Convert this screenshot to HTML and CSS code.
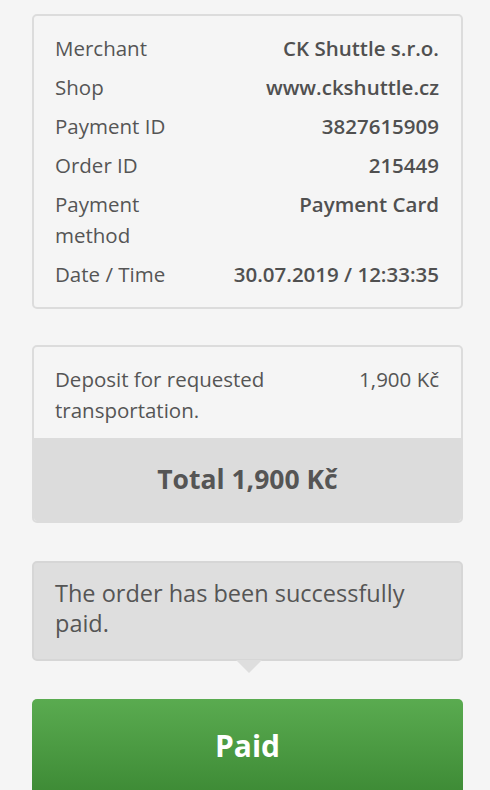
FILE: index.html
```html
<!DOCTYPE html>
<html lang="en">
<head>
    <meta charset="UTF-8">
    <meta name="viewport" content="width=device-width, initial-scale=1.0">
    <title>Payment result</title>
    <link rel="stylesheet" href="styles.css">
</head>
<body>
    <div class="page">
        <div class="box details">
            <div class="row">
                <span class="label">Merchant</span>
                <span class="value">CK Shuttle s.r.o.</span>
            </div>
            <div class="row">
                <span class="label">Shop</span>
                <span class="value">www.ckshuttle.cz</span>
            </div>
            <div class="row">
                <span class="label">Payment ID</span>
                <span class="value">3827615909</span>
            </div>
            <div class="row">
                <span class="label">Order ID</span>
                <span class="value">215449</span>
            </div>
            <div class="row">
                <span class="label narrow">Payment method</span>
                <span class="value">Payment Card</span>
            </div>
            <div class="row">
                <span class="label">Date / Time</span>
                <span class="value">30.07.2019 / 12:33:35</span>
            </div>
        </div>

        <div class="box cart">
            <div class="item">
                <span class="item-name">Deposit for requested transportation.</span>
                <span class="item-price">1,900 Kč</span>
            </div>
            <div class="total">Total 1,900 Kč</div>
        </div>

        <div class="message">The order has been successfully paid.</div>

        <div class="status">Paid</div>
    </div>
</body>
</html>
```

FILE: styles.css
```css
body {
    font-family: "Open Sans", "DejaVu Sans", sans-serif;
    background-color: #f5f5f5;
    color: #555;
    margin: 0;
    padding: 0;
}

.page {
    width: 431px;
    margin-left: 32px;
    padding-top: 14px;
}

.box {
    border: 2px solid #dcdcdc;
    border-radius: 5px;
    background-color: #f5f5f5;
}

.details {
    padding: 17px 22px 17px 21px;
}

.row {
    display: flex;
    justify-content: space-between;
    font-size: 20.5px;
    line-height: 31px;
    margin-bottom: 8px;
}

.row:last-child {
    margin-bottom: 0;
}

.label {
    color: #555;
}

.label.narrow {
    width: 150px;
}

.value {
    font-weight: 600;
    color: #505050;
    text-align: right;
}

.cart {
    margin-top: 36px;
    overflow: hidden;
}

.item {
    display: flex;
    justify-content: space-between;
    padding: 17px 22px 12px 21px;
    font-size: 20.5px;
    line-height: 31px;
}

.item-name {
    width: 240px;
}

.total {
    background-color: #dcdcdc;
    text-align: center;
    font-size: 26.5px;
    font-weight: 700;
    line-height: 83px;
    color: #555;
}

.message {
    position: relative;
    margin-top: 38px;
    background-color: #dedede;
    border: 2px solid #d6d6d6;
    border-radius: 5px;
    padding: 15px 40px 21px 21px;
    font-size: 23.5px;
    line-height: 30px;
    color: #555;
}

.message::after {
    content: "";
    position: absolute;
    left: 202px;
    bottom: -14px;
    border-left: 13px solid transparent;
    border-right: 13px solid transparent;
    border-top: 13px solid #dedede;
}

.status {
    margin-top: 38px;
    height: 96px;
    border-radius: 5px;
    background: linear-gradient(#5aab50, #3d8a35);
    color: #fff;
    text-align: center;
    font-size: 30px;
    font-weight: 700;
    line-height: 94px;
}
```
